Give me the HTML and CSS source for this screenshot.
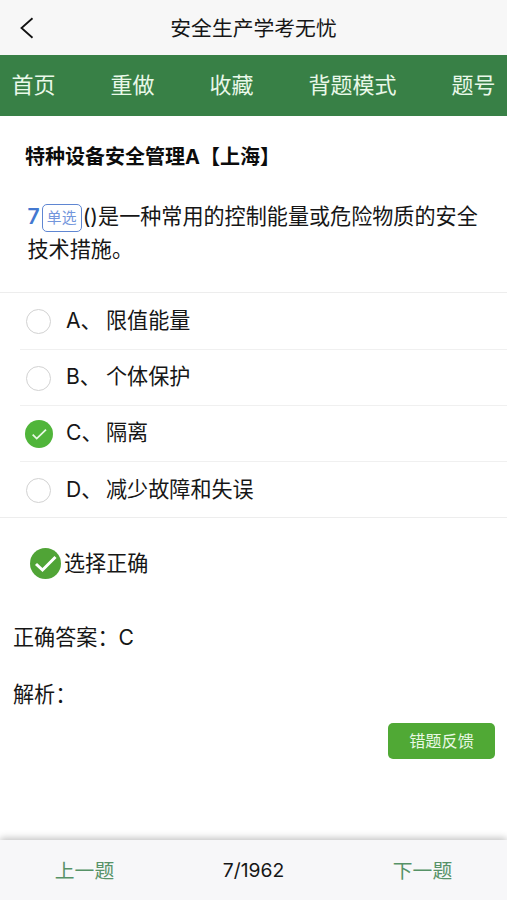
FILE: index.html
```html
<!DOCTYPE html>
<html lang="zh-CN">
<head>
<meta charset="utf-8">
<meta name="viewport" content="width=device-width, initial-scale=1">
<title>安全生产学考无忧</title>
<link rel="stylesheet" href="styles.css">
</head>
<body>
<header class="titlebar">
  <svg class="back" viewBox="0 0 14 22"><path d="M12.500 1.300 1.500 11l11 9.700"/></svg>
  <h1>安全生产学考无忧</h1>
</header>
<nav class="tabs">
  <a>首页</a><a>重做</a><a>收藏</a><a>背题模式</a><a>题号</a>
</nav>
<main>
  <h2 class="subject">特种设备安全管理A【上海】</h2>
  <p class="question"><b class="number">7</b><span class="tag">单选</span>()是一种常用的控制能量或危险物质的安全技术措施。</p>
  <ul class="options">
    <li><span class="mark"><i class="radio"></i></span><span class="letter">A、</span><span>限值能量</span></li>
    <li><span class="mark"><i class="radio"></i></span><span class="letter">B、</span><span>个体保护</span></li>
    <li><span class="mark"><svg class="checked" viewBox="0 0 28 28"><circle cx="14" cy="14" r="14"/><path d="m7.700 14.600 4 4L21 9.600"/></svg></span><span class="letter">C、</span><span>隔离</span></li>
    <li><span class="mark"><i class="radio"></i></span><span class="letter">D、</span><span>减少故障和失误</span></li>
  </ul>
  <div class="result">
    <svg class="result-icon" viewBox="0 0 31 31"><circle cx="15.500" cy="15.500" r="15.500"/><path d="m6 16 6.500 6L25.500 9"/></svg>
    <span>选择正确</span>
  </div>
  <p class="answer">正确答案：C</p>
  <p class="analysis">解析：</p>
  <button class="feedback">错题反馈</button>
</main>
<footer class="pager">
  <a>上一题</a><span class="count">7/1962</span><a>下一题</a>
</footer>
</body>
</html>
```
FILE: styles.css
```css
* { box-sizing: border-box; margin: 0; padding: 0; }

body {
  height: 900px;
  display: flex;
  flex-direction: column;
  background: #fff;
  color: #161616;
  font-family: Inter, "Noto Sans CJK SC", sans-serif;
  font-size: 21.1px;
  overflow: hidden;
}

.titlebar {
  height: 54.5px;
  padding-top: 2px;
  display: grid;
  grid-template-columns: 54px 1fr 54px;
  align-items: center;
  background: #f7f7f7;
}
.back {
  width: 14px;
  height: 22px;
  margin-left: 20px;
  fill: none;
  stroke: #111;
  stroke-width: 1.8;
}
.titlebar h1 {
  padding-top: 1px;
  font-size: 20.8px;
  font-weight: 400;
  line-height: 30px;
  text-align: center;
}

.tabs {
  height: 61px;
  padding: 0 11.500px;
  display: flex;
  justify-content: space-between;
  align-items: center;
  background: #388046;
  color: #e9f8e9;
  font-size: 22px;
  line-height: 32px;
}

main {
  flex: 1;
  display: flex;
  flex-direction: column;
}
.subject {
  margin: 26px 0 0 25px;
  font-size: 20px;
  font-weight: 700;
  line-height: 30px;
  color: #0c0c0c;
}
.question {
  height: 66px;
  margin: 28px 24px 0 27.500px;
  line-height: 33px;
}
.number { color: #4478d0; font-weight: 600; }
.tag {
  display: inline-block;
  width: 40px;
  height: 28px;
  margin: 0 1px 0 2px;
  border: 1.500px solid #5f86d2;
  border-radius: 5px;
  color: #7396dc;
  font-size: 14.800px;
  line-height: 27px;
  text-align: center;
  vertical-align: 1px;
}

.options {
  margin-top: 26px;
  border-top: 1px solid #ededed;
  border-bottom: 1px solid #ededed;
  list-style: none;
}
.options li {
  height: 56.200px;
  margin-left: 20px;
  display: flex;
  align-items: center;
  line-height: 32px;
}
.options li + li { border-top: 1px solid #f0f0f0; }
.mark {
  width: 37px;
  margin-right: 9px;
  padding-top: 2px;
  display: flex;
  justify-content: center;
}
.radio {
  width: 25px;
  height: 25px;
  border: 1.500px solid #d2d2d2;
  border-radius: 50%;
}
.checked { width: 28px; height: 28px; }
.checked circle { fill: #50b53a; }
.checked path { fill: none; stroke: #e9f8e4; stroke-width: 1.800; }
.letter { width: 40px; }

.result {
  margin: 30px 0 0 30px;
  height: 31px;
  display: flex;
  align-items: center;
  gap: 3px;
}
.result span { padding-bottom: 3px; }
.result-icon { width: 31px; height: 31px; }
.result-icon circle { fill: #50a436; }
.result-icon path { fill: none; stroke: #fff; stroke-width: 3; }

.answer, .analysis { margin-left: 13px; line-height: 32px; }
.answer { margin-top: 43px; }
.analysis { margin-top: 25px; }

.feedback {
  align-self: flex-end;
  width: 107px;
  height: 36px;
  margin: 12px 12px 0 0;
  border: 0;
  border-radius: 5px;
  background: #50a935;
  color: #e9f8e4;
  font: 16.200px/24px Inter, "Noto Sans CJK SC", sans-serif;
}

.pager {
  height: 60px;
  display: grid;
  grid-template-columns: repeat(3, 1fr);
  align-items: center;
  text-align: center;
  background: #f7f7f9;
  box-shadow: 0 -2px 7px rgba(0, 0, 0, .24);
  color: #569267;
  font-size: 19.800px;
}
.pager a { padding-bottom: 2px; }
.count { color: #161616; font-size: 19.300px; }
```
